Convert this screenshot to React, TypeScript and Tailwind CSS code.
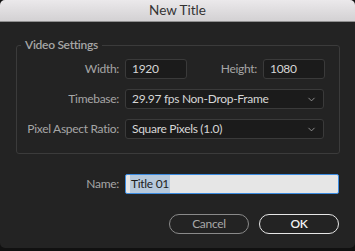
import { ChevronDown } from "lucide-react";

const FONT = { fontFamily: "Lato, 'Open Sans', sans-serif" };

function Field({ value, w }: { value: string; w: string }) {
  return (
    <div className={`${w} h-[20px] shrink-0 flex items-center pl-[6px] rounded-[3px] border border-[#3a3a3a] bg-[#1b1b1b] text-[12px] text-[#d6d6d6]`}>
      {value}
    </div>
  );
}

function Select({ value }: { value: string }) {
  return (
    <div className="w-[199px] h-[20px] shrink-0 flex items-center justify-between pl-[6px] pr-[6px] rounded-[3px] border border-[#3a3a3a] bg-[#1b1b1b] text-[12px] text-[#d6d6d6]">
      <span className="whitespace-nowrap">{value}</span>
      <ChevronDown size={11} strokeWidth={1.75} className="text-[#a8a8a8]" />
    </div>
  );
}

function Label({ text, w = "w-[108px]" }: { text: string; w?: string }) {
  return <span className={`${w} shrink-0 whitespace-nowrap pr-[6px] text-right text-[12px] text-[#a6a6a6]`}>{text}</span>;
}

export default function App() {
  return (
    <div className="w-[355px] h-[251px] bg-[#111] overflow-hidden tracking-[-0.3px]" style={FONT}>
      <div className="h-[248px] flex flex-col bg-[#232323] rounded-[5px] overflow-hidden">
        <div className="h-[22px] shrink-0 flex items-center justify-center bg-gradient-to-b from-[#ebe9eb] to-[#d3d1d3] border-b border-[#8f8f8f] text-[13.5px] tracking-normal text-[#333]">
          New Title
        </div>

        <fieldset className="mx-[16px] mt-[15px] w-[324px] border border-[#3b3b3b] rounded-[3px] pt-[6px] pb-[14px] flex flex-col gap-[10px]">
          <legend className="ml-[4px] px-[4px] leading-[16px] text-[12px] font-semibold text-[#a6a6a6]">Video Settings</legend>
          <div className="flex items-center">
            <Label text="Width:" />
            <Field value="1920" w="w-[62px]" />
            <Label text="Height:" w="w-[76px]" />
            <Field value="1080" w="w-[62px]" />
          </div>
          <div className="flex items-center">
            <Label text="Timebase:" />
            <Select value="29.97 fps Non-Drop-Frame" />
          </div>
          <div className="flex items-center">
            <Label text="Pixel Aspect Ratio:" />
            <Select value="Square Pixels (1.0)" />
          </div>
        </fieldset>

        <div className="mt-[20px] ml-[17px] flex items-center">
          <Label text="Name:" />
          <div className="w-[214px] h-[20px] flex items-center pl-[4px] rounded-[2px] border border-[#3b8be0] bg-[#e6e6e6] text-[12px] text-[#1e1e1e]">
            <span className="bg-[#b7c9dc] px-[1px]">Title 01</span>
          </div>
        </div>

        <div className="mt-[20px] mr-[16px] flex justify-end gap-[10px]">
          <button className="w-[80px] h-[20px] rounded-full border-[1.5px] border-[#8a8a8a] text-[12px] text-[#a8a8a8]">Cancel</button>
          <button className="w-[80px] h-[20px] rounded-full border-[1.5px] border-[#e6e6e6] text-[12px] font-semibold text-[#f2f2f2]">OK</button>
        </div>
      </div>
    </div>
  );
}
